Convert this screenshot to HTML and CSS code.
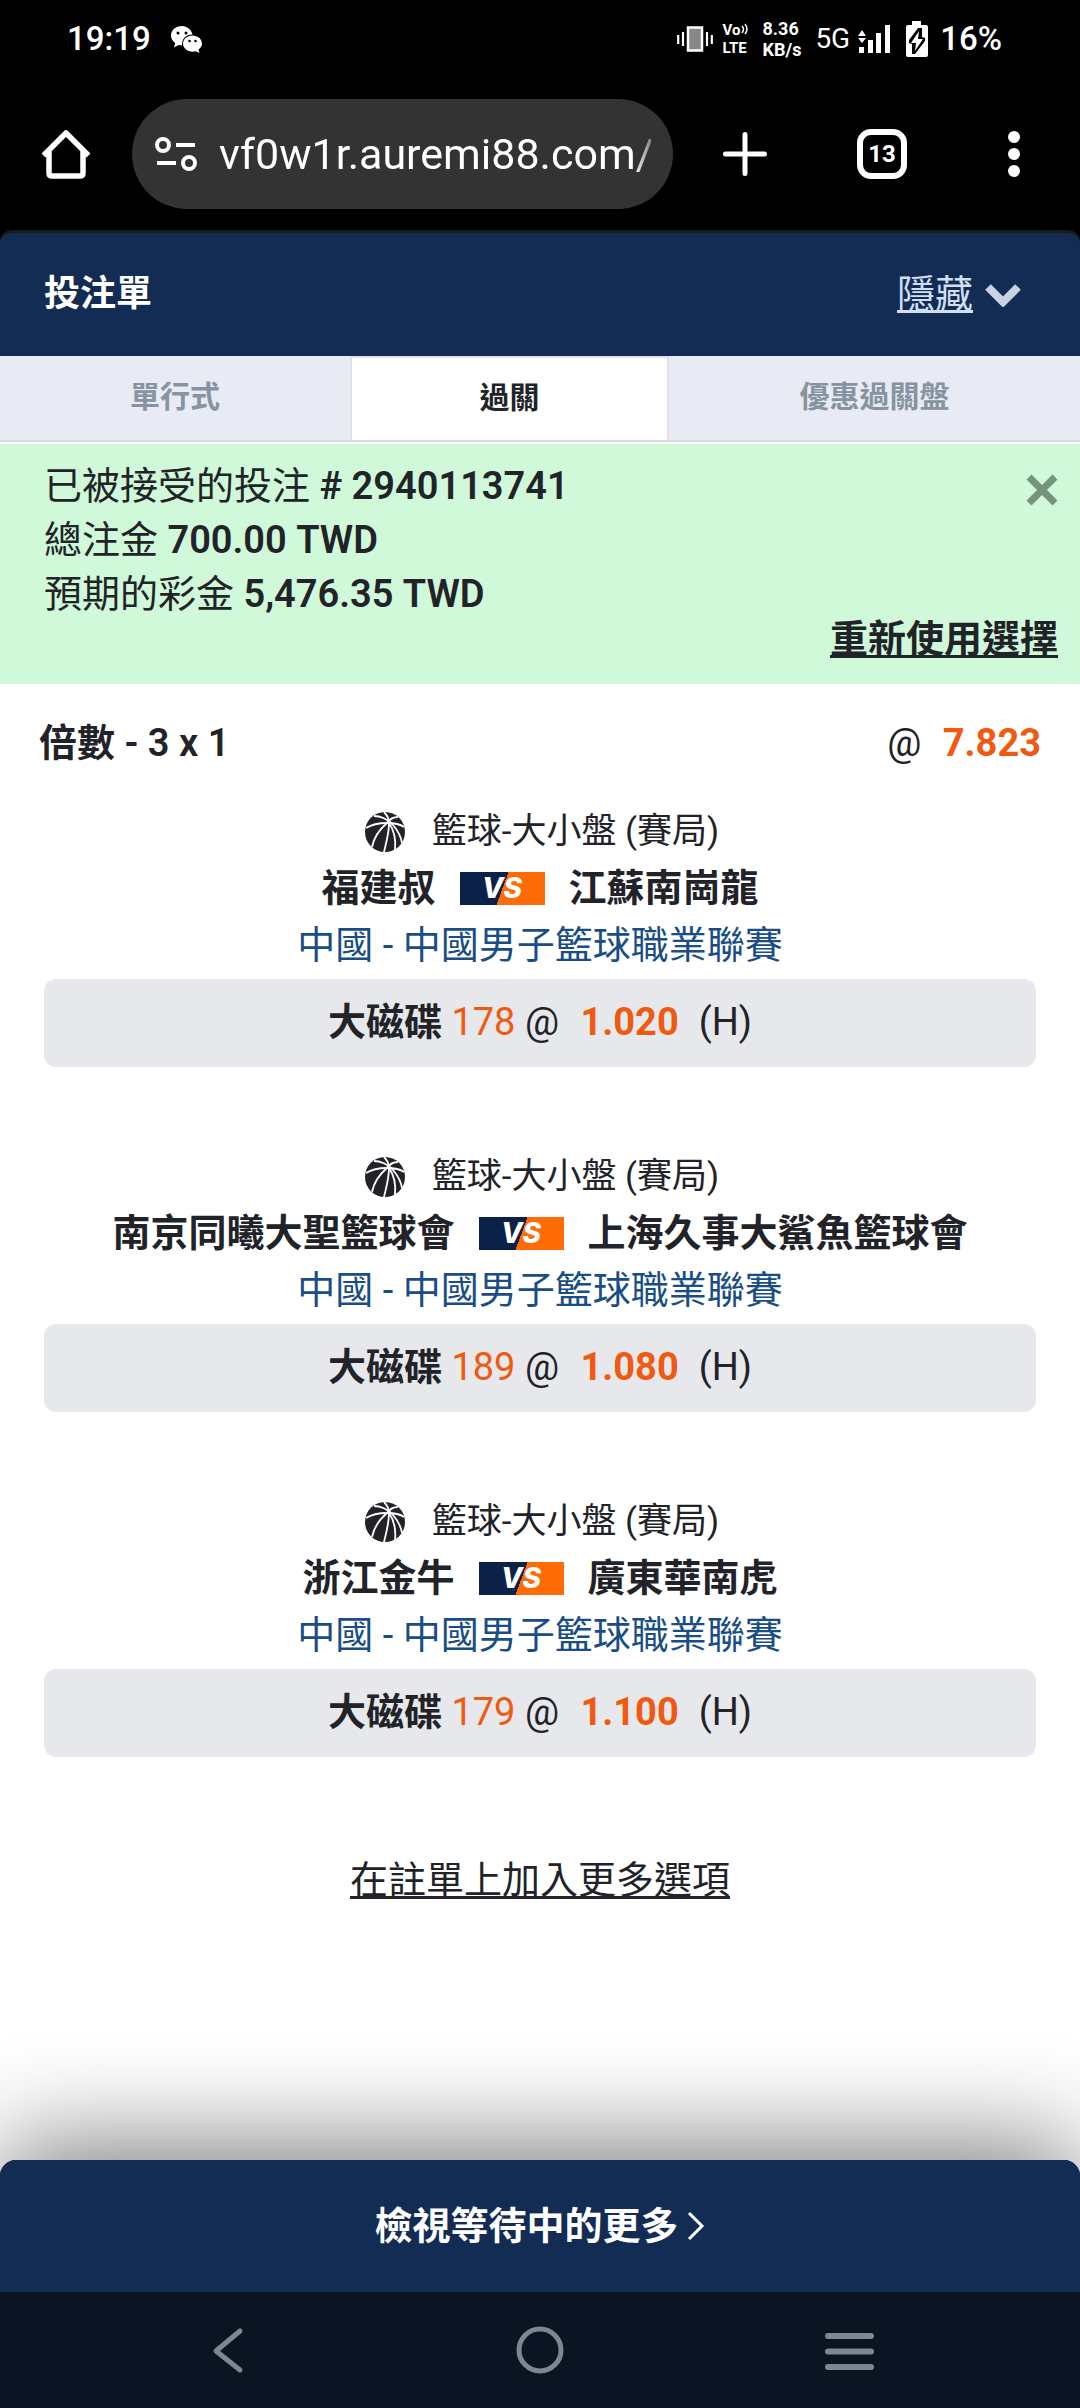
FILE: index.html
```html
<!DOCTYPE html>
<html lang="zh-Hant">
<head>
<meta charset="utf-8">
<meta name="viewport" content="width=device-width, initial-scale=1">
<title>投注單</title>
<link rel="stylesheet" href="styles.css">
</head>
<body>
<svg class="defs" aria-hidden="true">
  <symbol id="ball" viewBox="0 0 40 40">
    <circle cx="20" cy="20" r="20" fill="#222328"/>
    <g fill="none" stroke="#fff" stroke-width="1.800">
      <path d="M1 16C9 11 16 11 22 11C29 11 35 12 39 15"/>
      <path d="M9 4C15 4 23 7 28 13C34 20 36 25 37 31"/>
      <path d="M19 0C22 3 24 7 24 11C24 22 21 31 19 40"/>
      <path d="M33 5C28 5 24 8 22 11C15 17 9 25 7 35"/>
      <path d="M24 11C29 18 31 28 30 38"/>
    </g>
  </symbol>
</svg>
<div class="screen">
  <div class="status">
    <span class="clock">19:19</span>
    <svg class="wechat" viewBox="0 0 31 27"><path fill="#fff" d="M11 0C4.500 0 0 4.300 0 9.500c0 3.200 1.600 5.800 4.200 7.500L3 21.500l4.500-2.600c1.200.3 2.400.4 3.600.4C10.500 13 15 8.700 21.500 8.600 20.500 3.500 16 0 11 0z"/><path fill="#fff" d="M21.500 9.500c-5.300 0-9.500 3.600-9.500 8.100s4.200 8.200 9.500 8.200c1.100 0 2.200-.2 3.300-.5l3.700 1.700-1-3.300c2.100-1.500 3.500-3.600 3.500-6.100 0-4.500-4.200-8.100-9.500-8.100z"/><g fill="#000"><circle cx="7" cy="7" r="1.500"/><circle cx="15" cy="7" r="1.500"/><circle cx="18.500" cy="15" r="1.300"/><circle cx="24.500" cy="15" r="1.300"/></g></svg>
    <span class="spacer"></span>
    <svg class="vibrate" viewBox="0 0 36 26"><rect x="11" y="1.500" width="14" height="23" fill="#888" stroke="#fff" stroke-width="2.500"/><path d="M1.200 9v9M6 6v14M30 6v14M34.800 9v9" stroke="#fff" stroke-width="2.200"/></svg>
    <span class="volte"><span class="vo">Vo<svg viewBox="0 0 8 12"><path d="M1 3q3 3 0 7M4 1q4 5 0 10" fill="none" stroke="#fff" stroke-width="1.500"/></svg></span><span>LTE</span></span>
    <span class="speed"><span>8.36</span><span>KB/s</span></span>
    <span class="net">5G</span>
    <svg class="signal" viewBox="0 0 32 28"><path fill="#fff" d="M1 22h5v6H1zM10 15h5v13h-5zM18 8h5v20h-5zM27 0h5v28h-5zM0 11l4-6 4 6zM0 13h8l-4 5z"/></svg>
    <svg class="battery" viewBox="0 0 22 36"><path fill="#fff" d="M6 0h9v4h5q2 0 2 2v28q0 2-2 2H2q-2 0-2-2V6q0-2 2-2h4z"/><path fill="#000" d="M12 7L3 19v3l3 1v10h3l10-13v-3l-3-1V7z"/><path fill="#fff" d="M13 10L5 22h5l-1 8 8-12h-5z"/></svg>
    <span class="pct">16%</span>
  </div>
  <div class="browser">
    <button class="icon-btn home" aria-label="首頁"><svg viewBox="0 0 50 50"><path d="M2.500 26.500L25 4l22.500 22.500M8 21v23q0 3 3 3h28q3 0 3-3V21" fill="none" stroke="#fff" stroke-width="5.500" stroke-linejoin="round"/></svg></button>
    <div class="omnibox">
      <svg viewBox="0 0 42 34"><g fill="none" stroke="#fff" stroke-width="4"><circle cx="8" cy="8" r="6"/><circle cx="34" cy="26" r="6"/><path d="M21 8h19M2 26h19"/></g></svg>
      <input type="text" aria-label="網址" value="vf0w1r.auremi88.com/" readonly>
    </div>
    <button class="icon-btn plus" aria-label="新分頁"><svg viewBox="0 0 44 44"><path d="M22 2.500v39M2.500 22h39" stroke="#fff" stroke-width="5" stroke-linecap="round"/></svg></button>
    <button class="tabs-btn" aria-label="分頁">13</button>
    <button class="icon-btn dots" aria-label="選單"><svg viewBox="0 0 12 46"><g fill="#fff"><circle cx="6" cy="6" r="6"/><circle cx="6" cy="23" r="6"/><circle cx="6" cy="40" r="6"/></g></svg></button>
  </div>
  <main class="slip">
    <header class="slip-head">
      <h1>投注單</h1>
      <a class="hide" href="#"><span>隱藏</span><svg viewBox="0 0 36 24"><path d="M3 4l15 15L33 4" fill="none" stroke="#c9d2e3" stroke-width="8"/></svg></a>
    </header>
    <nav class="tabs">
      <button>單行式</button>
      <button class="active">過關</button>
      <button>優惠過關盤</button>
    </nav>
    <section class="accepted">
      <div class="lines">
        <p>已被接受的投注 <b># 2940113741</b></p>
        <p>總注金 <b>700.00 TWD</b></p>
        <p>預期的彩金 <b>5,476.35 TWD</b></p>
      </div>
      <button class="close" aria-label="關閉"><svg viewBox="0 0 32 32"><path d="M3 3l26 26M29 3L3 29" stroke="#76937c" stroke-width="7"/></svg></button>
      <a class="reuse" href="#">重新使用選擇</a>
    </section>
    <div class="multiple">
      <b>倍數 - 3 x 1</b>
      <span class="price">@ <b class="odds">7.823</b></span>
    </div>
    <ul class="bets">
      <li>
        <div class="market"><svg><use href="#ball"/></svg><span>籃球-大小盤 (賽局)</span></div>
        <div class="teams"><b>福建叔</b><span class="vs">VS</span><b>江蘇南崗龍</b></div>
        <a class="league" href="#">中國 - 中國男子籃球職業聯賽</a>
        <div class="pick"><b>大磁碟</b> <span class="line">178</span> @ <b class="odds">1.020</b><span class="tag">(H)</span></div>
      </li>
      <li>
        <div class="market"><svg><use href="#ball"/></svg><span>籃球-大小盤 (賽局)</span></div>
        <div class="teams"><b>南京同曦大聖籃球會</b><span class="vs">VS</span><b>上海久事大鯊魚籃球會</b></div>
        <a class="league" href="#">中國 - 中國男子籃球職業聯賽</a>
        <div class="pick"><b>大磁碟</b> <span class="line">189</span> @ <b class="odds">1.080</b><span class="tag">(H)</span></div>
      </li>
      <li>
        <div class="market"><svg><use href="#ball"/></svg><span>籃球-大小盤 (賽局)</span></div>
        <div class="teams"><b>浙江金牛</b><span class="vs">VS</span><b>廣東華南虎</b></div>
        <a class="league" href="#">中國 - 中國男子籃球職業聯賽</a>
        <div class="pick"><b>大磁碟</b> <span class="line">179</span> @ <b class="odds">1.100</b><span class="tag">(H)</span></div>
      </li>
    </ul>
    <a class="more" href="#">在註單上加入更多選項</a>
  </main>
  <div class="bottom">
    <button class="pending"><span>檢視等待中的更多</span><svg viewBox="0 0 20 30"><path d="M3 2l13 13L3 28" fill="none" stroke="#fff" stroke-width="3"/></svg></button>
    <div class="sysnav">
      <button aria-label="返回"><svg viewBox="0 0 50 50"><path d="M35 6L11 26l24 19" fill="none" stroke="#808691" stroke-width="5" stroke-linecap="round" stroke-linejoin="round"/></svg></button>
      <button aria-label="主畫面"><svg viewBox="0 0 50 50"><circle cx="25" cy="25" r="21" fill="none" stroke="#808691" stroke-width="5"/></svg></button>
      <button aria-label="最近"><svg viewBox="0 0 50 50"><path d="M3 11h43M3 26.500h43M3 42h43" stroke="#808691" stroke-width="6" stroke-linecap="round"/></svg></button>
    </div>
  </div>
</div>
</body>
</html>
```
FILE: styles.css
```css
* { box-sizing: border-box; }
body {
  margin: 0;
  background: #fff;
  color: #222328;
  font: 400 38px/57px Roboto, "Noto Sans CJK TC", sans-serif;
}
h1, p, ul { margin: 0; padding: 0; }
b, h1 { font-weight: 600; }
button, input {
  font: inherit;
  color: inherit;
  background: none;
  border: 0;
  padding: 0;
}
a { color: inherit; }
svg { display: block; flex: none; }
.defs { position: absolute; width: 0; height: 0; }
.screen { min-height: 100vh; display: flex; flex-direction: column; }

.status {
  height: 78px;
  padding: 0 78px 0 67px;
  display: flex;
  align-items: center;
  background: #000;
  color: #fff;
  font-size: 33px;
  line-height: 40px;
  font-weight: 500;
}
.wechat { width: 31px; height: 27px; margin-left: 20px; }
.spacer { flex: 1; }
.vibrate { width: 36px; height: 26px; }
.volte, .speed { display: flex; flex-direction: column; font-weight: 700; }
.volte { margin-left: 10px; font-size: 15px; line-height: 18px; }
.vo { display: flex; }
.vo svg { width: 8px; height: 12px; margin-top: 2px; }
.speed { margin-left: 14px; font-size: 18px; line-height: 21px; }
.net { margin-left: 14px; font-size: 28px; font-weight: 400; }
.signal { width: 32px; height: 28px; margin-left: 8px; }
.battery { width: 22px; height: 36px; margin-left: 16px; }
.pct { margin-left: 12px; }

.browser {
  height: 152px;
  padding: 0 60px 0 41px;
  display: flex;
  align-items: center;
  background: #000;
  color: #fff;
}
.home svg { width: 50px; height: 50px; }
.omnibox {
  flex: 1;
  min-width: 0;
  height: 110px;
  margin: 0 50px 0 41px;
  padding: 0 22px 0 23px;
  border-radius: 55px;
  background: #333;
  display: flex;
  align-items: center;
  gap: 22px;
}
.omnibox svg { width: 42px; height: 34px; }
.omnibox input {
  flex: 1;
  min-width: 0;
  font-size: 43px;
  line-height: 56px;
  -webkit-mask-image: linear-gradient(to right, #000 96%, rgba(0, 0, 0, .4));
  mask-image: linear-gradient(to right, #000 96%, rgba(0, 0, 0, .4));
}
.plus svg { width: 44px; height: 44px; }
.tabs-btn {
  width: 50px;
  height: 50px;
  margin: 0 101px 0 90px;
  border: 6px solid #fff;
  border-radius: 14px;
  font-size: 24px;
  line-height: 38px;
  font-weight: 700;
}
.dots svg { width: 12px; height: 46px; }

.slip { flex: 1; background: linear-gradient(#000 40px, #fff 40px); }
.slip-head {
  height: 126px;
  padding: 0 59px 0 44px;
  display: flex;
  align-items: center;
  justify-content: space-between;
  border-top: 3px solid #1a1a1f;
  background: #132c53;
  border-radius: 12px 12px 0 0;
  color: #fff;
}
.slip-head h1 { font-size: 36px; }
.hide { display: flex; align-items: center; gap: 12px; color: #d0dff3; text-decoration: none; }
.hide span { text-decoration: underline; text-decoration-thickness: 3px; text-underline-offset: 3px; }
.hide svg { width: 36px; height: 24px; }

.tabs {
  display: grid;
  grid-template-columns: 350fr 319fr 411fr;
  height: 86px;
  border-bottom: 2px solid #ddd;
  background: #e9ebf4;
}
.tabs button { padding-bottom: 2px; font-size: 30px; font-weight: 600; line-height: 44px; color: #8693a0; }
.tabs .active {
  color: #222328;
  background: #fff;
  border: 2px solid #dfe1e7;
  border-bottom: 0;
}
.accepted {
  margin-top: 2px;
  padding: 15px 22px 16px 44px;
  display: grid;
  grid-template-columns: 1fr auto;
  background: #cff9d8;
}
.accepted p { line-height: 54px; }
.lines { grid-row: 1; margin-bottom: -10px; }
.close { align-self: start; padding-top: 15px; }
.close svg { width: 32px; height: 32px; }
.reuse { grid-column: 1 / 3; justify-self: end; font-weight: 600; }
.reuse, .more { text-decoration: underline; text-decoration-thickness: 3px; text-underline-offset: 3px; }

.multiple {
  padding: 31px 39px;
  display: flex;
  justify-content: space-between;
}
.odds { color: #f05a10; font-weight: 700; margin-left: 12px; }
.bets { list-style: none; padding: 0 44px; }
.bets li { display: flex; flex-direction: column; align-items: center; margin-bottom: 81px; }
.market { display: flex; align-items: center; gap: 27px; padding-left: 4px; font-size: 35px; }
.market svg { width: 40px; height: 40px; }
.teams { display: flex; align-items: center; gap: 24px; }
.vs {
  width: 85px;
  height: 33px;
  background: linear-gradient(110deg, #0c2148 50%, #ff6b05 50%);
  color: #fff;
  font: italic 800 28px/33px Inter, sans-serif;
  text-align: center;
}
.league { color: #184d86; text-decoration: none; }
.pick {
  align-self: stretch;
  margin-top: 5px;
  padding: 15px 0 16px;
  border-radius: 12px;
  background: #e7e8ec;
  text-align: center;
}
.line { color: #f05a10; }
.tag { margin-left: 20px; }
.more { display: block; width: fit-content; margin: 95px auto 0; }

.bottom {
  background: #0b1423;
  border-radius: 16px 16px 0 0;
  box-shadow: 0 -20px 100px rgba(0, 0, 0, .48);
}
.pending {
  width: 100%;
  height: 132px;
  display: flex;
  align-items: center;
  justify-content: center;
  gap: 7px;
  border-radius: 16px 16px 0 0;
  background: #132c53;
  color: #fff;
  font-weight: 600;
}
.pending svg { width: 20px; height: 30px; }
.sysnav { height: 116px; display: grid; grid-template-columns: repeat(3, 310px); justify-content: center; }
.sysnav button { display: flex; align-items: center; justify-content: center; }
.sysnav svg { width: 50px; height: 50px; }
```
